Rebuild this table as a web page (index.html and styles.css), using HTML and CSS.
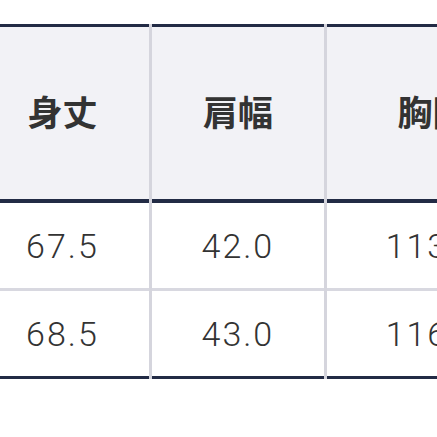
FILE: index.html
```html
<!DOCTYPE html>
<html lang="ja">
<head>
<meta charset="utf-8">
<link rel="stylesheet" href="styles.css">
</head>
<body>
<div class="wrap">
<table class="size">
<thead>
<tr><th class="c1">身丈</th><th class="c2">肩幅</th><th class="c3">胸囲</th></tr>
</thead>
<tbody>
<tr><td>67.5</td><td>42.0</td><td>113.0</td></tr>
<tr class="last"><td>68.5</td><td>43.0</td><td>116.0</td></tr>
</tbody>
</table>
</div>
</body>
</html>
```
FILE: styles.css
```css
html, body {
  margin: 0;
  padding: 0;
  background: #ffffff;
}
.wrap {
  width: 437px;
  height: 437px;
  overflow: hidden;
  padding-top: 24px;
  box-sizing: border-box;
}
.size {
  margin-left: -27px;
  border-collapse: separate;
  border-spacing: 3px 0;
  background: #d5d5dd;
  table-layout: fixed;
  width: 568px;
  font-family: "Noto Sans CJK JP", "Noto Sans", sans-serif;
  color: #333333;
}
.size th {
  background: #f2f2f6;
  border-top: 3px solid #222b45;
  border-bottom: 4px solid #222b45;
  height: 166px;
  padding: 0 0 6px 0;
  font-size: 35px;
  font-weight: 700;
  text-align: center;
  vertical-align: middle;
}
.c1 { width: 172px; }
.c2 { width: 171px; }
.c3 { width: 210px; }
.size td {
  background: #ffffff;
  height: 85px;
  padding: 0;
  border-bottom: 3px solid #d8d8e0;
  text-align: center;
  vertical-align: middle;
  font-family: Roboto, "Liberation Sans", sans-serif;
  font-weight: 300;
  font-size: 34px;
  letter-spacing: 2px;
}
.size tr.last td {
  border-bottom: 3px solid #222b45;
}
```
